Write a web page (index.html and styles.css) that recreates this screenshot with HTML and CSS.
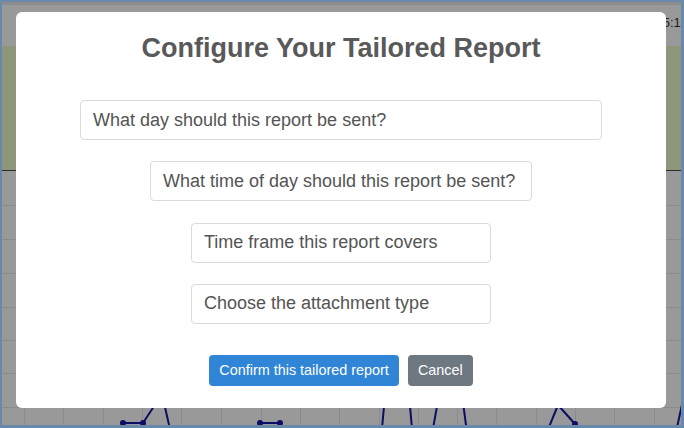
FILE: index.html
```html
<!DOCTYPE html>
<html lang="en">
<head>
<meta charset="utf-8">
<title>Configure Your Tailored Report</title>
<link rel="stylesheet" href="styles.css">
</head>
<body>
<div class="frame">
  <div class="topbar"><span class="clock">15:12</span></div>
  <div class="banner"></div>
  <div class="chart">
    <svg class="chart-svg" width="679" height="254" viewBox="2 171 679 254" xmlns="http://www.w3.org/2000/svg">
      <g stroke="#8b8b8b" stroke-width="1" shape-rendering="crispEdges">
        <line x1="24.5" y1="171" x2="24.5" y2="425"/>
        <line x1="63.5" y1="171" x2="63.5" y2="425"/>
        <line x1="103.5" y1="171" x2="103.5" y2="425"/>
        <line x1="142.5" y1="171" x2="142.5" y2="425"/>
        <line x1="181.5" y1="171" x2="181.5" y2="425"/>
        <line x1="221.5" y1="171" x2="221.5" y2="425"/>
        <line x1="261.5" y1="171" x2="261.5" y2="425"/>
        <line x1="300.5" y1="171" x2="300.5" y2="425"/>
        <line x1="339.5" y1="171" x2="339.5" y2="425"/>
        <line x1="379.5" y1="171" x2="379.5" y2="425"/>
        <line x1="418.5" y1="171" x2="418.5" y2="425"/>
        <line x1="457.5" y1="171" x2="457.5" y2="425"/>
        <line x1="496.5" y1="171" x2="496.5" y2="425"/>
        <line x1="536.5" y1="171" x2="536.5" y2="425"/>
        <line x1="575.5" y1="171" x2="575.5" y2="425"/>
        <line x1="614.5" y1="171" x2="614.5" y2="425"/>
        <line x1="654.5" y1="171" x2="654.5" y2="425"/>
        <line x1="2" y1="205.5" x2="681" y2="205.5"/>
        <line x1="2" y1="239.5" x2="681" y2="239.5"/>
        <line x1="2" y1="273.5" x2="681" y2="273.5"/>
        <line x1="2" y1="307.5" x2="681" y2="307.5"/>
        <line x1="2" y1="340.5" x2="681" y2="340.5"/>
        <line x1="2" y1="373.5" x2="681" y2="373.5"/>
        <line x1="2" y1="407.5" x2="681" y2="407.5"/>
      </g>
      <g stroke="#0d0d66" stroke-width="2" fill="none" stroke-linejoin="round">
        <polyline points="123,423 143,423 162,394 172,438"/>
        <polyline points="260,423 280,423"/>
        <polyline points="381,440 385,395 390,395"/>
        <polyline points="409,395 413,440"/>
        <polyline points="431,440 439,395"/>
        <polyline points="462,395 468,440"/>
        <polyline points="547,432 558,405 575,424"/>
        <polyline points="676,432 683,400"/>
      </g>
      <g fill="#0d0d66">
        <circle cx="123" cy="423" r="3"/>
        <circle cx="143" cy="423" r="3"/>
        <circle cx="260" cy="423" r="3"/>
        <circle cx="280" cy="423" r="3"/>
        <circle cx="575" cy="424" r="3"/>
      </g>
    </svg>
  </div>

  <div class="modal">
    <h2 class="modal-title">Configure Your Tailored Report</h2>
    <div class="field field-wide">What day should this report be sent?</div>
    <div class="field field-mid">What time of day should this report be sent?</div>
    <div class="field field-narrow">Time frame this report covers</div>
    <div class="field field-narrow">Choose the attachment type</div>
    <div class="actions">
      <button class="btn btn-confirm" type="button">Confirm this tailored report</button>
      <button class="btn btn-cancel" type="button">Cancel</button>
    </div>
  </div>
</div>
</body>
</html>
```

FILE: styles.css
```css
html, body {
  margin: 0;
  padding: 0;
}

body {
  font-family: "Liberation Sans", Arial, sans-serif;
  width: 684px;
  height: 428px;
  overflow: hidden;
}

.frame {
  position: relative;
  width: 684px;
  height: 428px;
  box-sizing: border-box;
  border-style: solid;
  border-color: #6889aa;
  border-width: 2px 3px 3px 2px;
  display: flex;
  flex-direction: column;
  overflow: hidden;
  background: #999999;
}

.topbar {
  height: 44px;
  box-sizing: border-box;
  flex-shrink: 0;
  background: #999999;
  border-top: 3px solid #8d8d8d;
  display: flex;
  justify-content: flex-end;
  align-items: flex-start;
  padding-top: 10px;
  overflow: hidden;
}

.clock {
  font-size: 13px;
  line-height: 15px;
  color: #1c1c1c;
  white-space: nowrap;
  flex-shrink: 0;
  margin-right: -7px;
}

.banner {
  height: 125px;
  box-sizing: border-box;
  flex-shrink: 0;
  background: #8e967a;
  border-bottom: 1px solid #2b2b2b;
}

.chart {
  flex: 1;
  background: #999999;
  overflow: hidden;
}

.chart-svg {
  display: block;
}

.modal {
  position: absolute;
  left: 14px;
  top: 10px;
  width: 650px;
  height: 396px;
  box-sizing: border-box;
  background: #ffffff;
  border-radius: 6px;
  display: flex;
  flex-direction: column;
  align-items: center;
  padding-top: 21px;
}

.modal-title {
  margin: 0 0 36px;
  font-size: 27px;
  line-height: 31px;
  font-weight: bold;
  color: #595959;
  text-align: center;
}

.field {
  height: 40px;
  box-sizing: border-box;
  border: 1px solid #dadada;
  border-radius: 4px;
  padding: 0 12px;
  font-size: 18px;
  color: #545454;
  display: flex;
  align-items: center;
  white-space: nowrap;
  margin-bottom: 21.3px;
}

.field-wide {
  width: 522px;
}

.field-mid {
  width: 382px;
}

.field-narrow {
  width: 300px;
}

.actions {
  display: flex;
  gap: 9px;
  margin-top: 9.7px;
}

.btn {
  height: 31px;
  padding: 0 10px;
  border: none;
  border-radius: 4px;
  font-family: "Liberation Sans", Arial, sans-serif;
  font-size: 14.4px;
  color: #ffffff;
  cursor: pointer;
}

.btn-confirm {
  background: #3085d6;
}

.btn-cancel {
  background: #6e7881;
}
```
